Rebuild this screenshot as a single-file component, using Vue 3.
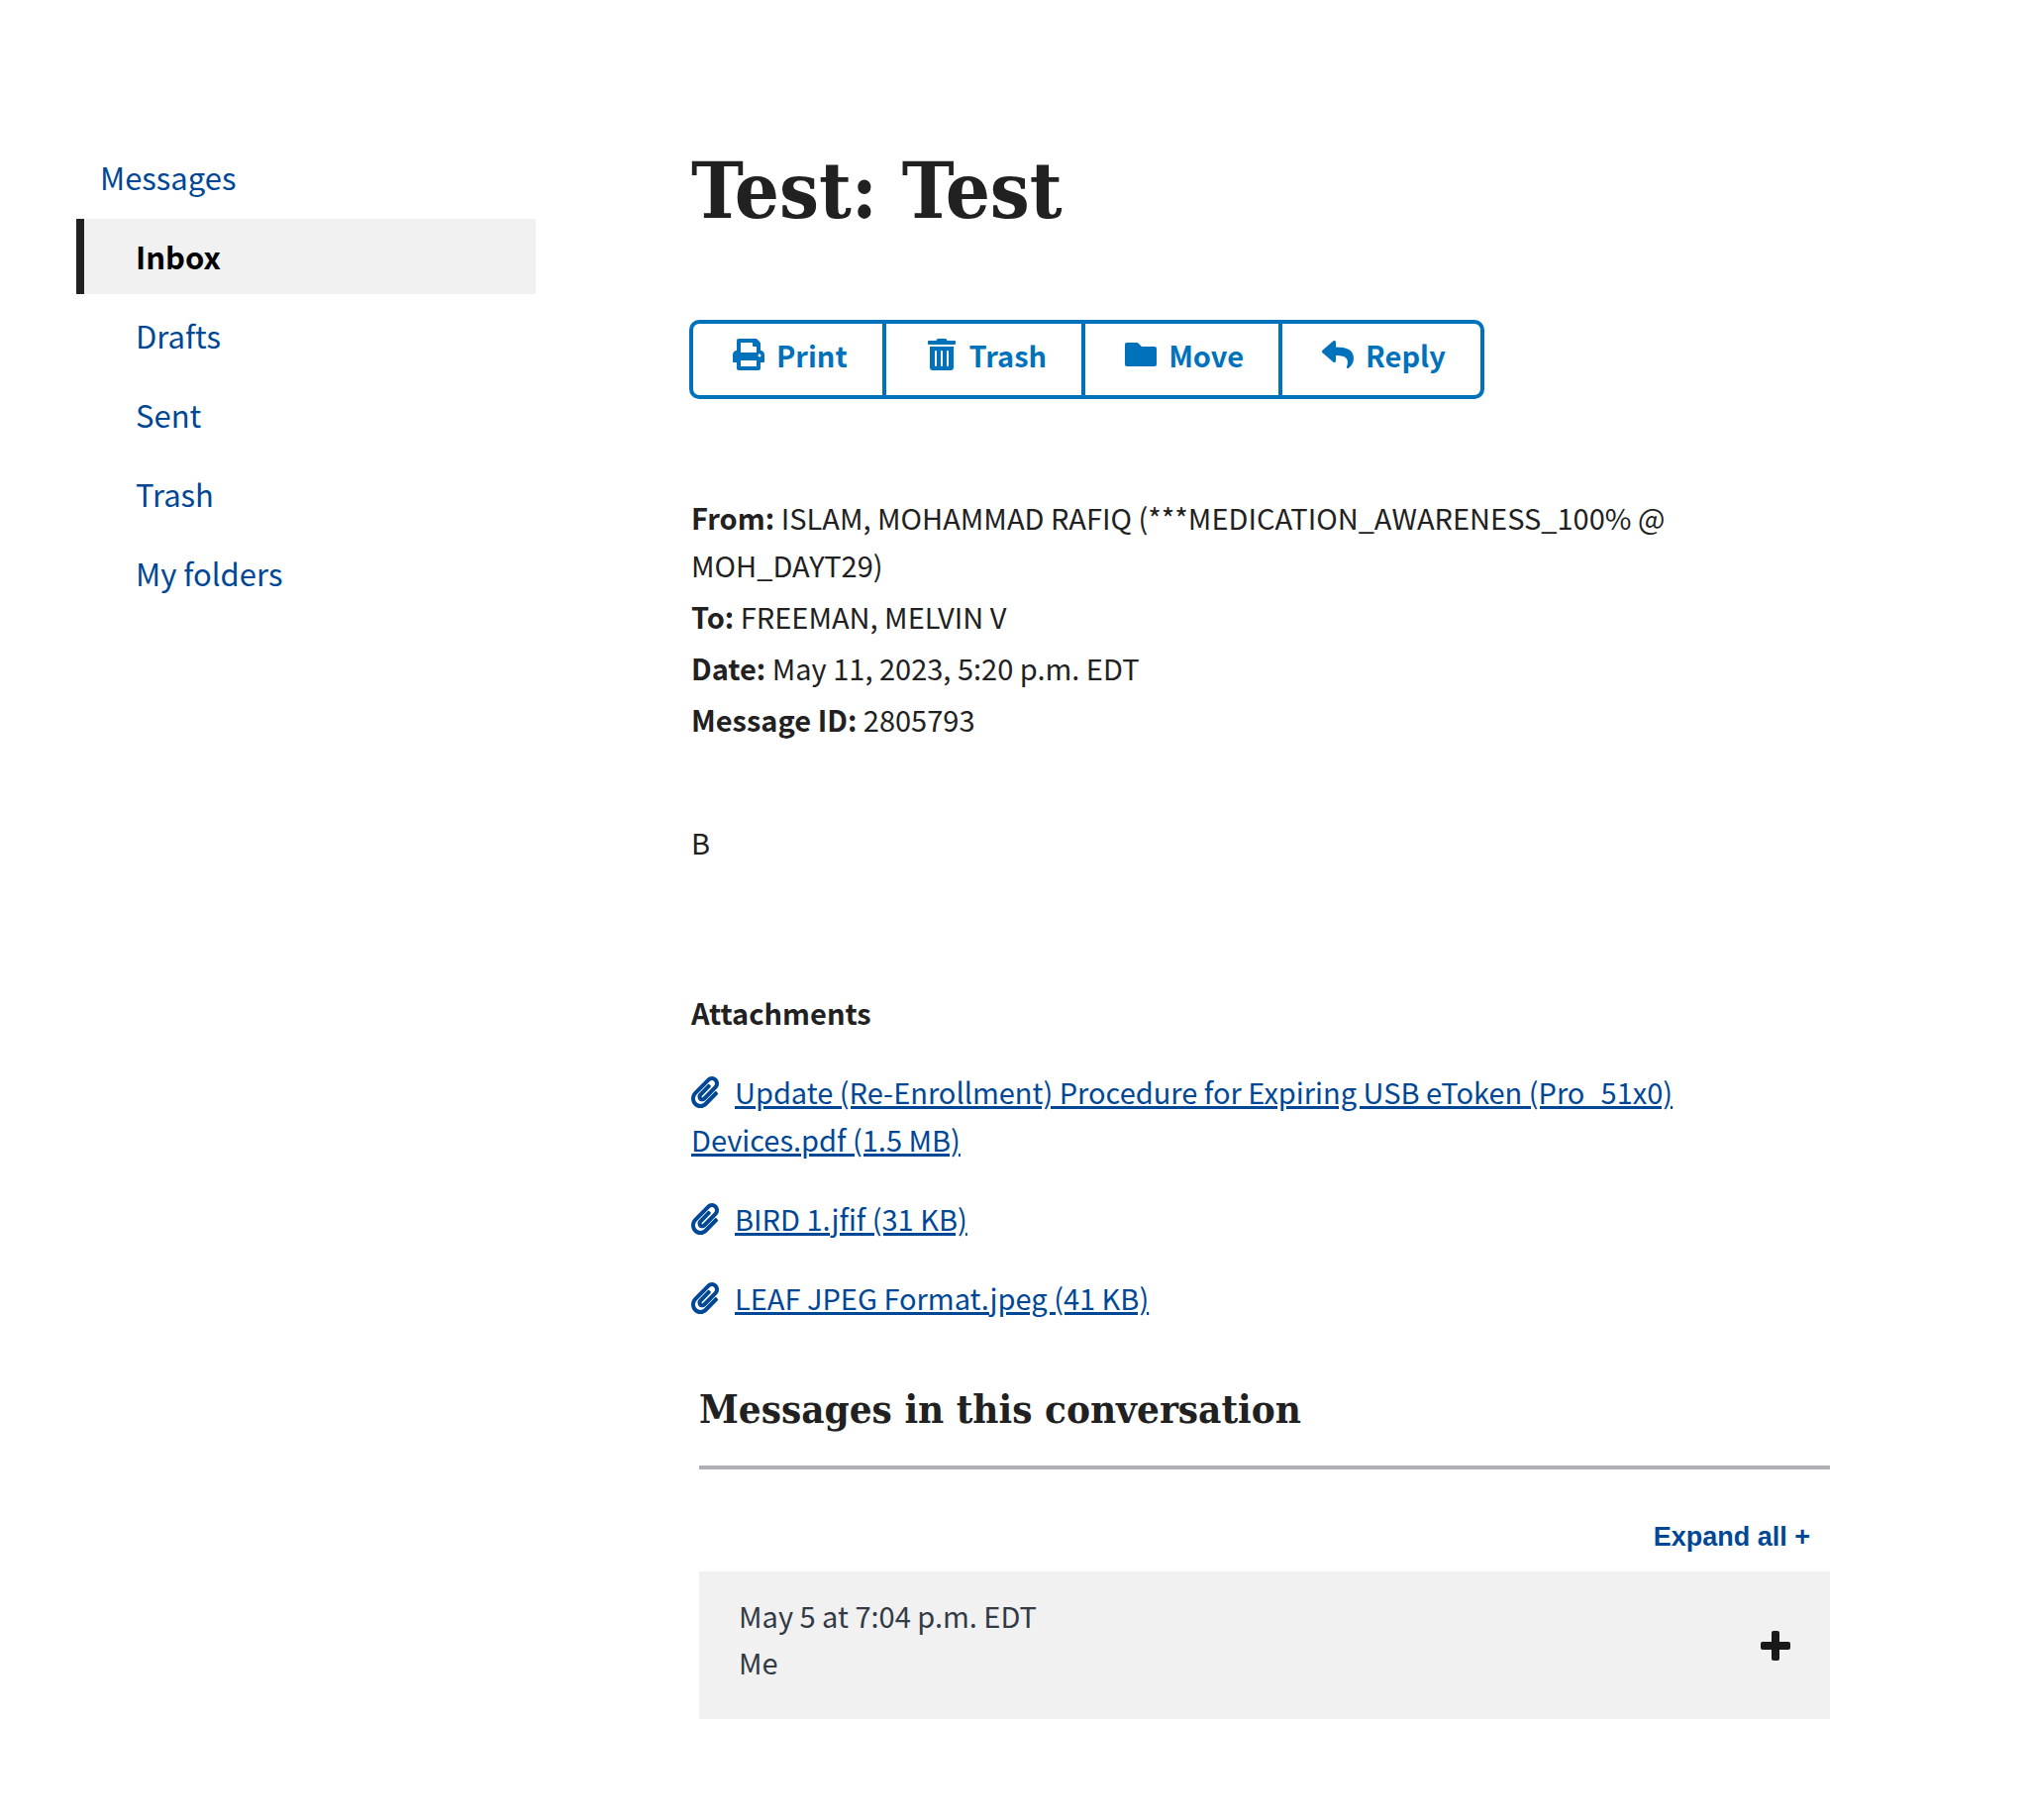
<script setup>
import { ref } from 'vue'

const folders = ['Inbox', 'Drafts', 'Sent', 'Trash', 'My folders']
const currentFolder = ref('Inbox')

const actions = [
  {
    label: 'Print',
    box: '0 0 512 512',
    path: 'M448 192V77.25c0-8.49-3.37-16.62-9.37-22.63L393.37 9.37c-6-6-14.14-9.37-22.63-9.37H96C78.33 0 64 14.33 64 32v160c-35.35 0-64 28.65-64 64v112c0 8.84 7.16 16 16 16h48v96c0 17.67 14.33 32 32 32h320c17.67 0 32-14.33 32-32v-96h48c8.84 0 16-7.16 16-16V256c0-35.35-28.65-64-64-64zm-64 256H128v-96h256v96zm0-224H128V64h192v48c0 8.84 7.16 16 16 16h48v96zm48 72c-13.25 0-24-10.75-24-24 0-13.26 10.75-24 24-24s24 10.74 24 24c0 13.25-10.75 24-24 24z'
  },
  {
    label: 'Trash',
    box: '0 0 448 512',
    path: 'M32 464a48 48 0 0 0 48 48h288a48 48 0 0 0 48-48V128H32zm272-256a16 16 0 0 1 32 0v224a16 16 0 0 1-32 0zm-96 0a16 16 0 0 1 32 0v224a16 16 0 0 1-32 0zm-96 0a16 16 0 0 1 32 0v224a16 16 0 0 1-32 0zM432 32H312l-9.4-18.7A24 24 0 0 0 281.1 0H166.8a23.72 23.72 0 0 0-21.4 13.3L136 32H16A16 16 0 0 0 0 48v32a16 16 0 0 0 16 16h416a16 16 0 0 0 16-16V48a16 16 0 0 0-16-16z'
  },
  {
    label: 'Move',
    box: '0 0 512 512',
    path: 'M480 128H272l-54-54q-10-10-24-10H32C14 64 0 78 0 96v320c0 18 14 32 32 32h448c18 0 32-14 32-32V160c0-18-14-32-32-32z'
  },
  {
    label: 'Reply',
    box: '0 0 512 512',
    path: 'M8.309 189.836L184.313 37.851C199.719 24.546 224 35.347 224 56.015v80.053c160.629 1.839 288 34.032 288 186.258 0 61.441-39.581 122.309-83.333 154.132-13.653 9.931-33.111-2.533-28.077-18.631 45.344-145.012-21.507-183.51-176.59-185.742V360c0 20.7-24.3 31.453-39.687 18.164l-176.004-152c-11.071-9.562-11.086-26.753 0-36.328z'
  }
]

const details = [
  { label: 'From:', value: 'ISLAM, MOHAMMAD RAFIQ (***MEDICATION_AWARENESS_100% @ MOH_DAYT29)' },
  { label: 'To:', value: 'FREEMAN, MELVIN V' },
  { label: 'Date:', value: 'May 11, 2023, 5:20 p.m. EDT' },
  { label: 'Message ID:', value: '2805793' }
]

const attachments = [
  'Update (Re-Enrollment) Procedure for Expiring USB eToken (Pro_51x0) Devices.pdf (1.5 MB)',
  'BIRD 1.jfif (31 KB)',
  'LEAF JPEG Format.jpeg (41 KB)'
]
</script>

<template>
  <div class="page">
    <nav class="sidebar" aria-label="Messages">
      <a class="nav-link" href="#messages">Messages</a>
      <a
        v-for="folder in folders"
        :key="folder"
        class="nav-link nested"
        :class="{ current: folder === currentFolder }"
        href="#folder"
        @click.prevent="currentFolder = folder"
      >{{ folder }}</a>
    </nav>

    <main class="message">
      <h1 class="title">Test: Test</h1>

      <div class="toolbar">
        <button v-for="action in actions" :key="action.label" type="button" class="action">
          <svg class="action-icon" :viewBox="action.box" width="32" height="32" aria-hidden="true">
            <path :d="action.path" />
          </svg>
          <span>{{ action.label }}</span>
        </button>
      </div>

      <section class="body">
        <ul class="details">
          <li v-for="item in details" :key="item.label"><strong>{{ item.label }}</strong> {{ item.value }}</li>
        </ul>
        <p class="text">B</p>
        <h2 class="attachments-title">Attachments</h2>
        <ul class="attachments">
          <li v-for="name in attachments" :key="name">
            <svg class="clip" viewBox="0 0 448 512" width="28" height="32" aria-hidden="true">
              <path d="M43.246 466.142c-58.43-60.289-57.341-157.511 1.386-217.581L254.392 34c44.316-45.332 116.351-45.336 160.671 0 43.89 44.894 43.943 117.329 0 162.276L232.214 383.128c-29.855 30.537-78.633 30.111-107.982-.998-28.275-29.97-27.368-77.473 1.452-106.953l143.743-146.835c6.182-6.314 16.312-6.422 22.626-.241l22.861 22.379c6.315 6.182 6.422 16.312.241 22.626L171.427 319.927c-4.932 5.045-5.236 13.428-.648 18.292 4.372 4.634 11.245 4.711 15.688.165l182.849-186.851c19.613-20.062 19.613-52.725-.011-72.798-19.189-19.627-49.957-19.637-69.154 0L90.39 293.295c-34.763 35.56-35.299 93.12-1.191 128.313 34.01 35.093 88.985 35.137 123.058.286l172.06-175.999c6.177-6.319 16.307-6.433 22.626-.256l22.877 22.364c6.319 6.177 6.434 16.307.256 22.626l-172.06 175.998c-59.576 60.938-155.943 60.216-214.77-.485z" />
            </svg><a href="#attachment">{{ name }}</a>
          </li>
        </ul>
      </section>

      <section class="conversation">
        <h2 class="conversation-title">Messages in this conversation</h2>
        <button type="button" class="expand">Expand all +</button>
        <button type="button" class="entry" aria-expanded="false">
          <span class="entry-text">
            <span>May 5 at 7:04 p.m. EDT</span>
            <span>Me</span>
          </span>
          <svg class="plus" viewBox="0 0 30 30" width="30" height="30" aria-hidden="true">
            <rect x="11" y="0" width="8" height="30" rx="2" />
            <rect x="0" y="11" width="30" height="8" rx="2" />
          </svg>
        </button>
      </section>
    </main>
  </div>
</template>

<style>
body {
  margin: 0;
  background: #fff;
}
</style>

<style scoped>
.page {
  display: flex;
  align-items: flex-start;
  gap: 155px;
  padding: 141px 201px 103px 77px;
  font-family: "Noto Sans CJK SC", "Open Sans", sans-serif;
  font-size: 29px;
  line-height: 48px;
  color: #212121;
}

button {
  font-family: inherit;
  background: none;
  border: 0;
  border-radius: 0;
  margin: 0;
  cursor: pointer;
}

ul {
  list-style: none;
  margin: 0;
  padding: 0;
}

h1,
h2,
p {
  margin: 0;
}

.sidebar {
  flex: 0 0 464px;
  display: flex;
  flex-direction: column;
  gap: 4px;
}

.nav-link {
  padding: 15px 24px 15px;
  font-size: 31px;
  line-height: 46px;
  color: #004795;
  text-decoration: none;
}

.nested {
  padding-left: 60px;
}

.nested.current {
  border-left: 8px solid #212121;
  padding-left: 52px;
  background: #f1f1f1;
  color: #000;
  font-weight: 700;
}

.message {
  flex: 1;
  min-width: 0;
}

.title {
  padding: 0 2px;
  font-family: "DejaVu Serif Condensed", "DejaVu Serif", serif;
  font-size: 79px;
  line-height: 104px;
  font-weight: 700;
}

.toolbar {
  display: inline-flex;
  margin-top: 78px;
  border: 4px solid #0071bb;
  border-radius: 10px;
}

.action {
  display: flex;
  align-items: center;
  gap: 12px;
  padding: 7px 35px 17px 40px;
  font-size: 29px;
  line-height: 48px;
  font-weight: 700;
  color: #0071bb;
}

.action + .action {
  border-left: 4px solid #0071bb;
}

.action-icon {
  fill: currentColor;
}

.body {
  max-width: 1060px;
  padding: 95px 2px 0;
}

.details li + li {
  margin-top: 4px;
}

.text {
  margin-top: 76px;
}

.attachments-title {
  margin-top: 124px;
  font-size: 29px;
  line-height: 48px;
}

.attachments li {
  margin-top: 32px;
}

.attachments a {
  color: #004795;
  text-decoration-thickness: 3px;
  text-underline-offset: 2px;
}

.clip {
  fill: #004795;
  margin-right: 16px;
  vertical-align: -4px;
}

.conversation {
  display: flex;
  flex-direction: column;
  margin: 63px 0 0 10px;
}

.conversation-title {
  padding-bottom: 31px;
  border-bottom: 4px solid #aeb0b5;
  font-family: "DejaVu Serif Condensed", "DejaVu Serif", serif;
  font-size: 40px;
  line-height: 52px;
}

.expand {
  align-self: flex-end;
  margin: 44px 20px 11px 0;
  padding: 0;
  font-family: "Liberation Sans", Arial, sans-serif;
  font-size: 27px;
  line-height: 48px;
  font-weight: 700;
  color: #004795;
}

.entry {
  display: flex;
  align-items: center;
  justify-content: space-between;
  padding: 0 40px;
  background: #f1f1f1;
  font-size: 29px;
  line-height: 47px;
  color: #323a45;
  text-align: left;
}

.entry-text {
  display: flex;
  flex-direction: column;
  padding: 21px 0 34px;
}

.plus {
  fill: #191919;
}
</style>
